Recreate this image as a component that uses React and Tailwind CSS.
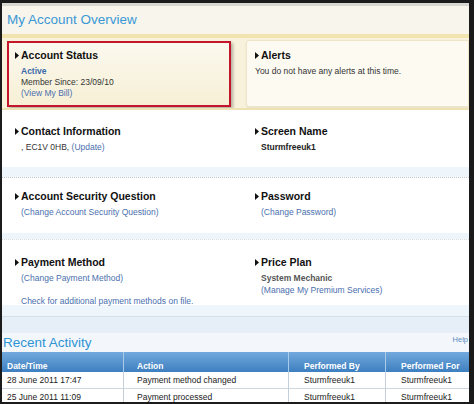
import React from "react";

const Tri = () => (
  <svg width="4" height="7" viewBox="0 0 4 7" className="mr-[2px] shrink-0 -mt-[1px]">
    <path d="M0 0L4 3.5L0 7Z" fill="#111" />
  </svg>
);

const Heading = ({ children }) => (
  <div className="flex items-center text-[10.5px] leading-[13px] font-bold text-[#111] whitespace-nowrap">
    <Tri />
    {children}
  </div>
);

const Link = ({ children }) => <span className="text-[#4a6fae]">{children}</span>;

export default function App() {
  const rows = [
    ["28 June 2011 17:47", "Payment method changed", "Sturmfreeuk1", "Sturmfreeuk1"],
    ["25 June 2011 11:09", "Payment processed", "Sturmfreeuk1", "Sturmfreeuk1"],
  ];
  return (
    <div className="w-[474px] h-[404px] bg-[#1b1b1b] pt-[3px] pl-[2px] pr-[5px] pb-[2px] font-['Liberation_Sans',Arial,sans-serif]">
      <div className="w-full h-full overflow-hidden bg-white flex flex-col">
        {/* top gray line */}
        <div className="h-[3px] bg-[#d8d8d3] shrink-0" />
        {/* header */}
        <div className="h-[28px] shrink-0 bg-[#f7f5ec] flex items-center pl-[5px]">
          <span className="text-[13.5px] leading-[16px] text-[#3b98d5]">My Account Overview</span>
        </div>
        <div className="h-[4px] shrink-0 bg-[#f2e4ae]" />
        {/* top row */}
        <div className="h-[70px] shrink-0 bg-[#f8f2dc] flex pl-[5px] pt-[2px]">
          <div className="mt-[1px] w-[224px] h-[66px] shrink-0 border-2 border-[#c4162b] bg-[linear-gradient(to_bottom,#fbf8ee,#f7f0d6)] shadow-[2px_2px_3px_rgba(0,0,0,0.28)] pl-[6px] pt-[6px]">
            <Heading>Account Status</Heading>
            <div className="pl-[6px] mt-[4px] text-[8.5px] leading-[11px] text-[#333]">
              <div className="font-bold text-[#3b6aa8]">Active</div>
              <div>Member Since: 23/09/10</div>
              <div>
                <Link>(View My Bill)</Link>
              </div>
            </div>
          </div>
          <div className="ml-[15px] flex-1 h-[67px] bg-[#fdfaf1] border border-[#eee5c8] rounded-l-[3px] shadow-[0_1px_2px_rgba(0,0,0,0.08)] pl-[8px] pt-[8px]">
            <Heading>Alerts</Heading>
            <div className="mt-[4px] text-[8.5px] leading-[11px] text-[#333]">
              You do not have any alerts at this time.
            </div>
          </div>
        </div>
        <div className="h-[2px] shrink-0 bg-[#eee2b4]" />
        {/* row 2 */}
        <div className="h-[68px] shrink-0 grid grid-cols-[240px_1fr] bg-[linear-gradient(to_bottom,#ffffff_57px,#eef5fb_57px)] border-b border-dotted border-[#c3c8cd]">
          <div className="pl-[13px] pt-[15px]">
            <Heading>Contact Information</Heading>
            <div className="pl-[6px] mt-[4px] text-[8.5px] leading-[11px] text-[#333]">
              , EC1V 0HB, <Link>(Update)</Link>
            </div>
          </div>
          <div className="pl-[13px] pt-[15px]">
            <Heading>Screen Name</Heading>
            <div className="pl-[6px] mt-[4px] text-[8.5px] leading-[11px] font-bold text-[#222]">Sturmfreeuk1</div>
          </div>
        </div>
        {/* row 3 */}
        <div className="h-[62px] shrink-0 grid grid-cols-[240px_1fr] bg-[linear-gradient(to_bottom,#ffffff_55px,#eef5fb_55px)] border-b border-dotted border-[#d6dbe0]">
          <div className="pl-[13px] pt-[12px]">
            <Heading>Account Security Question</Heading>
            <div className="pl-[6px] mt-[4px] text-[8.5px] leading-[11px]">
              <Link>(Change Account Security Question)</Link>
            </div>
          </div>
          <div className="pl-[13px] pt-[12px]">
            <Heading>Password</Heading>
            <div className="pl-[6px] mt-[4px] text-[8.5px] leading-[11px]">
              <Link>(Change Password)</Link>
            </div>
          </div>
        </div>
        {/* row 4 */}
        <div className="h-[77px] shrink-0 grid grid-cols-[240px_1fr] bg-[linear-gradient(to_bottom,#ffffff_65px,#eef5fb_65px)] border-b border-[#d3dfea]">
          <div className="pl-[13px] pt-[16px]">
            <Heading>Payment Method</Heading>
            <div className="pl-[6px] mt-[4px] text-[8.5px] leading-[11px]">
              <Link>(Change Payment Method)</Link>
            </div>
            <div className="pl-[6px] mt-[12px] text-[8.5px] leading-[11px] whitespace-nowrap">
              <Link>Check for additional payment methods on file.</Link>
            </div>
          </div>
          <div className="pl-[13px] pt-[16px]">
            <Heading>Price Plan</Heading>
            <div className="pl-[6px] mt-[4px] text-[8.5px] leading-[11px] font-bold text-[#555]">System Mechanic</div>
            <div className="pl-[6px] mt-[1px] text-[8.5px] leading-[11px]">
              <Link>(Manage My Premium Services)</Link>
            </div>
          </div>
        </div>
        {/* recent activity */}
        <div className="h-[16px] shrink-0 bg-[#e6eef7]" />
        <div className="h-[19px] shrink-0 bg-[#f3f7fb] flex justify-between items-center pl-[1px] pr-[1px]">
          <span className="text-[13.5px] leading-[16px] text-[#2f94d4] whitespace-nowrap">Recent Activity</span>
          <span className="self-start mt-[2px] text-[7.5px] leading-[9px] text-[#5a8ac0]">Help</span>
        </div>
        {/* table */}
        <div className="shrink-0">
          <div className="h-[20px] grid grid-cols-[122px_165px_97px_1fr] bg-[linear-gradient(to_bottom,#72a9dd,#3e7fc0)] text-white font-bold text-[8.5px] leading-[10px] whitespace-nowrap">
            <div className="flex items-end pb-[1px] pl-[5px] border-r border-[#a9cbea]">Date/Time</div>
            <div className="flex items-end pb-[1px] pl-[13px] border-r border-[#a9cbea]">Action</div>
            <div className="flex items-end pb-[1px] pl-[15px] border-r border-[#a9cbea]">Performed By</div>
            <div className="flex items-end pb-[1px] pl-[15px]">Performed For</div>
          </div>
          {rows.map((r, i) => (
            <div
              key={i}
              className="h-[17px] grid grid-cols-[122px_165px_97px_1fr] bg-white border-b border-[#cfd6dd] text-[8.5px] leading-[17px] text-[#222] whitespace-nowrap"
            >
              <div className="pl-[5px] border-r border-[#c3cfdb]">{r[0]}</div>
              <div className="pl-[13px] border-r border-[#c3cfdb]">{r[1]}</div>
              <div className="pl-[15px] border-r border-[#c3cfdb]">{r[2]}</div>
              <div className="pl-[15px]">{r[3]}</div>
            </div>
          ))}
        </div>
      </div>
    </div>
  );
}
